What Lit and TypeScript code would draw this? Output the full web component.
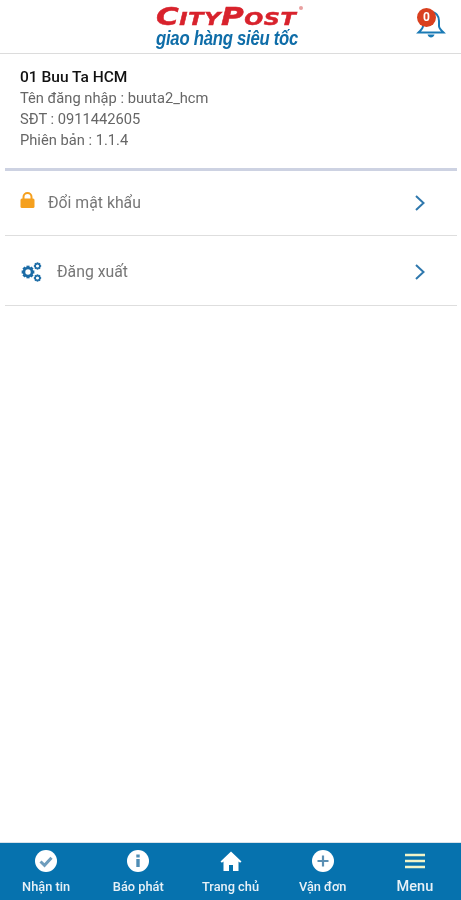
import { LitElement, html, css, svg } from "lit";
import { customElement } from "lit/decorators.js";

const chevron = html`<svg class="chev" width="12" height="18" viewBox="0 0 12 18"><path d="M2 2l7.500 7-7.500 7" fill="none" stroke="#2f78ad" stroke-width="2"/></svg>`;

const gear = (cx: number, cy: number, r: number, sw: number) => {
  const teeth = [0, 45, 90, 135, 180, 225, 270, 315].map(
    (a) => svg`<rect x=${cx - sw * 0.6} y=${cy - r - sw * 0.9} width=${sw * 1.2} height=${sw * 1.1} fill="#1c6ca6" transform="rotate(${a} ${cx} ${cy})"/>`
  );
  return svg`<circle cx=${cx} cy=${cy} r=${r} fill="none" stroke="#1c6ca6" stroke-width=${sw}/>${teeth}`;
};

const navItems = [
  { label: "Nhận tin", icon: html`<svg width="24" height="24" viewBox="0 0 24 24"><circle cx="12" cy="12" r="11" fill="#fff"/><path d="M6.500 12.500l4 3.800 7-7.500" fill="none" stroke="#6f9dbd" stroke-width="3"/></svg>` },
  { label: "Báo phát", icon: html`<svg width="24" height="24" viewBox="0 0 24 24"><circle cx="12" cy="12" r="11" fill="#fff"/><rect x="10.300" y="10" width="3.400" height="8" fill="#4f8db5"/><rect x="10.300" y="5.500" width="3.400" height="3" fill="#4f8db5"/></svg>` },
  { label: "Trang chủ", icon: html`<svg width="24" height="24" viewBox="0 0 24 24"><path d="M12 2.500L1.500 12.500l1.400 1.300L4.500 12.500V22h5.500v-6h4v6h5.500v-9.500l1.600 1.300 1.400-1.300z" fill="#fff"/></svg>` },
  { label: "Vận đơn", icon: html`<svg width="24" height="24" viewBox="0 0 24 24"><circle cx="12" cy="12" r="11" fill="#fff"/><path d="M12 6.500v11M6.500 12h11" stroke="#5b8fb3" stroke-width="2.200"/></svg>` },
  { label: "Menu", menu: true, icon: html`<svg width="22" height="18" viewBox="0 0 22 18"><path d="M1 3h20M1 9h20M1 15h20" stroke="#f1f4c8" stroke-width="2.600"/></svg>` },
];

@customElement("app-root")
export class AppRoot extends LitElement {
  static styles = css`
    :host { display: block; }
    .page {
      width: 461px; height: 900px; display: flex; flex-direction: column;
      background: #fff; font-family: Roboto, "Noto Sans", sans-serif; overflow: hidden;
      filter: blur(0.5px);
    }
    .header {
      height: 54px; flex: none; box-sizing: border-box; border-bottom: 1px solid #dcdcdc;
      position: relative; display: flex; justify-content: center;
    }
    .logo {
      width: 146px; display: flex; flex-direction: column; align-items: flex-start; padding-top: 5px;
      font-style: italic; font-weight: 700; position: relative; margin-left: -3px;
    }
    .brand {
      color: #d8222c; font-family: "DejaVu Sans", sans-serif; font-size: 25px; line-height: 24px;
      font-variant: small-caps; letter-spacing: 0.5px; white-space: nowrap;
      transform: scaleX(1.24); transform-origin: left; -webkit-text-stroke: 0.5px #d8222c;
    }
    .slogan {
      color: #0f6da8; font-family: "Liberation Sans", Arial, sans-serif; font-size: 20px; line-height: 20px;
      white-space: nowrap; transform: scaleX(0.835); transform-origin: left; letter-spacing: -0.3px; margin-top: -1px;
    }
    .reg { position: absolute; left: 143px; top: 6px; width: 4px; height: 4px; border-radius: 50%; background: #e9a0a0; }
    .bell { position: absolute; left: 416px; top: 7px; }
    .badge {
      position: absolute; left: 417px; top: 8px; width: 19px; height: 19px; border-radius: 50%;
      background: #d9401f; color: #fff; font-size: 12px; font-weight: 700; line-height: 19px; text-align: center;
    }
    .info {
      margin: 0 4px 0 5px; padding: 12px 0 0 15px; height: 117px; box-sizing: border-box;
      border-bottom: 3px solid #cdd2e2; font-size: 14.700px; line-height: 20.800px; color: #666;
    }
    .info .name { color: #111; font-weight: 500; font-size: 15.500px; line-height: 22px; }
    .row {
      margin: 0 4px 0 5px; height: 70px; box-sizing: border-box; border-bottom: 1px solid #dedede;
      display: flex; align-items: center; color: #777; font-size: 15.800px; padding: 2px 31px 0 15px;
    }
    .row.first { height: 65px; padding-top: 0; }
    .row.first .label { margin-top: -2px; }
    .row .label { flex: 1; }
    .row svg.ic { flex: none; }
    .lock { margin-right: 13px; margin-top: -7px; }
    .gears { margin-right: 15px; }
    .spacer { flex: 1; }
    .nav {
      height: 58px; flex: none; box-sizing: border-box; border-top: 1px solid #d8e2ea;
      background: #0672ae; display: flex; padding: 6px 0 0 0;
    }
    .tab { flex: 1; display: flex; flex-direction: column; align-items: center; color: #e8f1f7; font-size: 12.800px; font-weight: 500; line-height: 14px; gap: 7px; }
    .tab.menu { font-size: 14.500px; gap: 10px; padding-top: 3px; }
  `;
  render() {
    return html`<div class="page">
      <header class="header">
        <div class="logo">
          <span class="brand">CityPost</span>
          <span class="slogan">giao hàng siêu tốc</span>
          <span class="reg"></span>
        </div>
        <svg class="bell" width="30" height="32" viewBox="0 0 30 32"><path d="M15 5c-5 0-8 4-8 9v5c0 2.500-2 4-4.500 6.500h25C25 23 23 21.500 23 19v-5c0-5-3-9-8-9z" fill="none" stroke="#1a7ab5" stroke-width="2"/><path d="M11.500 27.500h7c-.5 2-2 3-3.500 3s-3-1-3.500-3z" fill="#1a7ab5"/></svg>
        <span class="badge">0</span>
      </header>
      <section class="info">
        <div class="name">01 Buu Ta HCM</div>
        <div>Tên đăng nhập : buuta2_hcm</div>
        <div>SĐT : 0911442605</div>
        <div>Phiên bản : 1.1.4</div>
      </section>
      <div class="row first">
        <svg class="ic lock" width="15" height="16" viewBox="0 0 15 16"><path d="M3.500 7V5a4 4 0 018 0v2" fill="none" stroke="#f5a01e" stroke-width="2"/><rect x="0.500" y="6.500" width="14" height="9.500" rx="1.500" fill="#f5a01e"/></svg>
        <span class="label">Đổi mật khẩu</span>${chevron}
      </div>
      <div class="row">
        <svg class="ic gears" width="22" height="22" viewBox="0 0 22 22">${gear(8, 11, 4, 2.600)}${gear(17.500, 5, 2.300, 1.500)}${gear(17.500, 17, 2.300, 1.500)}</svg>
        <span class="label">Đăng xuất</span>${chevron}
      </div>
      <div class="spacer"></div>
      <nav class="nav">
        ${navItems.map((n) => html`<div class="tab ${n.menu ? "menu" : ""}">${n.icon}<span>${n.label}</span></div>`)}
      </nav>
    </div>`;
  }
}
